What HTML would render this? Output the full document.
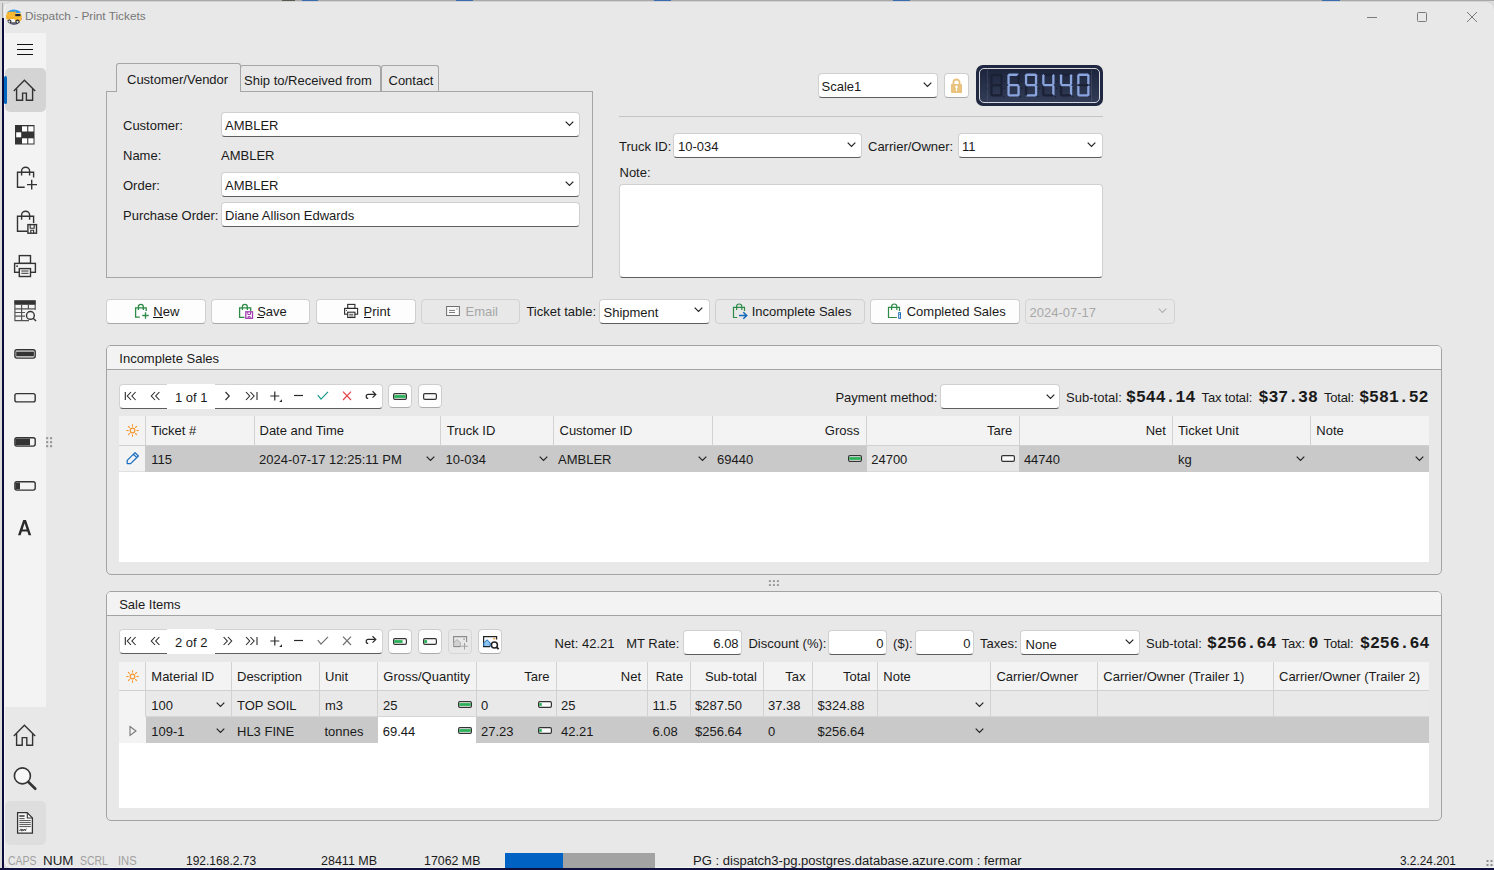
<!DOCTYPE html>
<html><head><meta charset="utf-8">
<style>
*{box-sizing:border-box;margin:0;padding:0}
html,body{width:1494px;height:870px;overflow:hidden;background:#e8e8e8;font-family:"Liberation Sans",sans-serif;font-size:13px;color:#1a1a1a}
.a{position:absolute}
.t{position:absolute;line-height:15px;white-space:nowrap}
.inp{position:absolute;background:#fff;border:1px solid #d0d0d0;border-bottom:1px solid #5e5e5e;border-radius:4px}
.inp.d{background:#e8e8e8;border-color:#cfcfcf}
.chev{position:absolute;width:7px;height:7px;border-right:1.3px solid #333;border-bottom:1.3px solid #333;transform:rotate(45deg)}
.btn{position:absolute;background:#fdfdfd;border:1px solid #d0d0d0;border-bottom-color:#a8a8a8;border-radius:4px}
.ic{position:absolute}
.gh{position:absolute;background:#f3f3f3}
.vl{position:absolute;width:1px;background:#d8d8d8}
</style></head><body>
<!-- desktop edges -->
<div class="a" style="left:0;top:0;width:1494px;height:870px;background:#dcdcdc"></div>
<div class="a" style="left:2px;top:3px;width:1px;height:17px;background:#a8a8a8"></div>
<div class="a" style="left:2px;top:18px;width:2px;height:852px;background:#0c0c3c"></div>
<div class="a" style="left:0;top:868px;width:1494px;height:2px;background:#0f0f3e"></div>
<div class="a" style="left:0;top:0;width:1494px;height:1px;background:#a9a9a9"></div>
<div class="a" style="left:4px;top:1px;width:1490px;height:867px;background:#e8e8e8;border-radius:8px 8px 0 8px;border-top:1px solid #d2d2d2;border-left:1px solid #f4f4f4;border-bottom:1px solid #f4f4f4"></div>
<div class="a" style="left:302px;top:0;width:16px;height:1px;background:#3a6cb0"></div><div class="a" style="left:456px;top:0;width:17px;height:1px;background:#3a6cb0"></div><div class="a" style="left:654px;top:0;width:17px;height:1px;background:#3a6cb0"></div><div class="a" style="left:893px;top:0;width:17px;height:1px;background:#3a6cb0"></div><div class="a" style="left:1322px;top:0;width:18px;height:1px;background:#3a6cb0"></div><div class="a" style="left:282px;top:0;width:13px;height:1px;background:#5a5a50"></div>
<!-- title bar -->
<svg class="a" style="left:4px;top:6px" width="22" height="22" viewBox="4 6 22 22">
<defs><clipPath id="tc"><circle cx="14" cy="16.9" r="8"/></clipPath></defs>
<g clip-path="url(#tc)">
<rect x="5" y="8" width="18" height="18" fill="#e9eef4"/>
<path d="M6 12.5 Q10 9 14 9.5 Q18 9.5 22 12 V13 H6 Z" fill="#3096e8"/>
<path d="M6 11.8 H14.5 L15.6 11 V19.5 H6 Z" fill="#f6b22a"/>
<path d="M15 13.3 H20.8 L22.2 16.5 V21.5 H15 Z" fill="#f8bd2e"/>
<rect x="15.3" y="14" width="5.2" height="2.2" fill="#1e2238"/>
<rect x="21.2" y="18.2" width="1" height="1.6" fill="#e8508a"/>
<rect x="10.3" y="19.2" width="4.4" height="2.6" fill="#f4f4f2"/>
<path d="M6 22.2 H22 V26 H6 Z" fill="#5d5b70"/>
<circle cx="9.3" cy="21.5" r="2.1" fill="#22222e"/><circle cx="9.3" cy="21.6" r="1.1" fill="#e0e0e0"/>
<circle cx="17.5" cy="21.7" r="2.1" fill="#22222e"/><circle cx="17.5" cy="21.8" r="1.1" fill="#e0e0e0"/>
<path d="M7 13 L9 17 M9.5 12.5 L11.5 17 M12 12.5 L14 17" stroke="#f9cf60" stroke-width="0.8" opacity="0.7"/>
</g>
</svg>
<div class="t" style="left:25px;top:8.5px;font-size:11.8px;color:#777">Dispatch - Print Tickets</div>
<div class="a" style="left:1367px;top:17px;width:10px;height:1px;background:#7a7a7a"></div>
<div class="a" style="left:1417px;top:12px;width:10px;height:10px;border:1px solid #7a7a7a;border-radius:1.5px"></div>
<svg class="a" style="left:1466px;top:11px" width="12" height="12" viewBox="0 0 12 12"><path d="M1 1L11 11M11 1L1 11" stroke="#7a7a7a" stroke-width="1"/></svg>

<!-- sidebar -->
<div class="a" style="left:4px;top:33px;width:42px;height:674px;background:#f3f3f3"></div>
<div class="a" style="left:17px;top:44px;width:16px;height:1px;background:#111"></div>
<div class="a" style="left:17px;top:49px;width:16px;height:1px;background:#111"></div>
<div class="a" style="left:17px;top:54px;width:16px;height:1px;background:#111"></div>
<div class="a" style="left:5px;top:68px;width:41px;height:44px;background:#d4d4d4;border-radius:5px"></div>
<div class="a" style="left:4px;top:76px;width:3px;height:28px;background:#0067c0;border-radius:2px"></div>
<div class="a" style="left:5px;top:801px;width:41px;height:44px;background:#dedede;border-radius:5px"></div>
<svg class="a" style="left:0;top:0" width="60" height="870" viewBox="0 0 60 870" fill="none" stroke="#333" stroke-width="1.4">
<!-- home active -->
<path d="M13.8 91 L24.4 80.3 L35.2 91 M16.6 88.8 V100.3 H22.6 V93.1 H26.4 V100.3 H32.6 V88.8"/>
<!-- checker -->
<g stroke="none">
<rect x="15" y="125" width="19.5" height="19.5" fill="#333"/>
<rect x="22" y="126.3" width="5.2" height="5.2" fill="#fff"/><rect x="28.3" y="126.3" width="5.2" height="5.2" fill="#fff"/>
<rect x="16.2" y="132.3" width="5" height="5" fill="#fff"/>
<rect x="22" y="138.3" width="5.2" height="5.2" fill="#fff"/><rect x="28.3" y="138.3" width="5.2" height="5.2" fill="#fff"/>
</g>
<!-- bag plus -->
<path d="M33.6 177.5 V172.3 H17.5 V187.3 H24.7 M21.6 175.6 V171 A4 3.8 0 0 1 29.6 171 V175.6 M27 184.6 H37 M31.7 179.8 V189.6"/>
<!-- bag save -->
<path d="M33.6 223 V216.2 H17.5 V231.2 H27.3 M21.6 219.8 V215 A4 3.8 0 0 1 29.6 215 V219.8"/>
<rect x="27.9" y="224.6" width="8.6" height="8.6"/>
<path d="M30.2 224.6 V228.2 H34.2 V224.6 M30.8 233.2 V230.3 H33.6 V233.2" stroke-width="1.1"/>
<!-- printer -->
<rect x="19.3" y="255.6" width="11.2" height="7.8"/>
<rect x="14.6" y="263.4" width="20.8" height="8.9" fill="#f3f3f3"/>
<rect x="19.3" y="268.6" width="11.2" height="7.9" fill="#f3f3f3"/>
<path d="M21.3 271 H28.5 M21.3 273.3 H28.5" stroke-width="1"/>
<rect x="16.3" y="265.4" width="1.6" height="1.6" fill="#333" stroke="none"/>
<!-- table search -->
<rect x="14.2" y="300.2" width="21.6" height="4.6" fill="#333" stroke="none"/>
<path d="M14.9 304.5 V320.6 H29 M21.6 304.5 V320.6 M28.4 304.5 V309 M35.2 304.5 V310 M14.9 308.8 H35.2 M14.9 312.5 H25 M14.9 316.2 H25" stroke-width="1.2" stroke="#555"/>
<circle cx="30.4" cy="315.4" r="3.9" fill="#f3f3f3" stroke-width="1.4"/>
<path d="M33.2 318.3 L36 321"/>
<!-- batteries -->
<rect x="14.9" y="349.8" width="20.3" height="8.3" rx="2"/>
<rect x="16.2" y="351.6" width="17.7" height="4.7" fill="#333" stroke="none"/>
<rect x="14.9" y="393.6" width="20.3" height="8.3" rx="2"/>
<rect x="14.9" y="437.8" width="20.3" height="8.3" rx="2"/>
<rect x="15.4" y="438.6" width="14.6" height="6.7" fill="#333" stroke="none"/>
<rect x="14.9" y="481.8" width="20.3" height="8.3" rx="2"/>
<rect x="15.4" y="482.6" width="4.6" height="6.7" fill="#333" stroke="none"/>
<!-- A -->
<path d="M18 535.3 L23.2 520 H26 L31.2 535.3 H28.6 L27.34 531.6 H21.86 L20.6 535.3 Z M22.6 529.4 H26.6 L24.6 523.2 Z" fill="#2a2a2a" stroke="none" fill-rule="evenodd"/>
<!-- splitter dots -->
<g fill="#979797" stroke="none">
<rect x="46.1" y="437.1" width="2.1" height="2.1"/><rect x="50" y="437.1" width="2.1" height="2.1"/>
<rect x="46.1" y="441.1" width="2.1" height="2.1"/><rect x="50" y="441.1" width="2.1" height="2.1"/>
<rect x="46.1" y="445.1" width="2.1" height="2.1"/><rect x="50" y="445.1" width="2.1" height="2.1"/>
</g>
<!-- home 2 -->
<path d="M13.8 736 L24.4 725.3 L35.2 736 M16.6 733.8 V745.3 H22.2 V737.6 H26.8 V745.3 H32.6 V733.8"/>
<!-- search -->
<circle cx="22.4" cy="775.9" r="8" stroke-width="1.6" fill="#f7f7f7"/>
<path d="M28.4 782 L35.3 788.8" stroke-width="2.6" stroke-linecap="round"/>
<!-- doc -->
<path d="M17.6 812.6 H27.1 L32.4 817.9 V833.1 H17.6 Z" fill="#fafafa" stroke-width="1.3"/>
<path d="M27.3 812.8 V818 H32.3" stroke-width="1.1"/>
<path d="M19.3 816 H24.6" stroke-width="1.5"/>
<path d="M19.3 818.6 H24.6 M19.3 820.6 H30.8 M19.3 822.6 H30.8 M19.3 824.6 H30.8 M19.3 826.6 H30.8" stroke-width="0.85"/>
<path d="M19.3 830.3 H20.4 L21.1 828.9 L21.9 831.2 L22.8 829.2 L23.6 830.7 L24.4 829 L25.3 830.8 L26.3 828.6" stroke-width="0.9"/>
</svg>



<!-- ============ TAB PANEL ============ -->
<div class="a" style="left:106px;top:91px;width:487px;height:187px;border:1px solid #a6a6a6"></div>
<div class="a" style="left:240px;top:65px;width:141px;height:27px;border:1px solid #a6a6a6;border-bottom:none;border-radius:3px 3px 0 0"></div>
<div class="a" style="left:381px;top:65px;width:58px;height:27px;border:1px solid #a6a6a6;border-bottom:none;border-radius:3px 3px 0 0"></div>
<div class="a" style="left:116px;top:63px;width:125px;height:29px;border:1px solid #a6a6a6;border-bottom:none;border-radius:3px 3px 0 0;background:#e8e8e8"></div>
<div class="t" style="left:127px;top:72px">Customer/Vendor</div>
<div class="t" style="left:244px;top:73px">Ship to/Received from</div>
<div class="t" style="left:388.5px;top:73px">Contact</div>

<div class="t" style="left:123px;top:118px">Customer:</div>
<div class="inp" style="left:221px;top:112px;width:359px;height:25px"></div>
<div class="t" style="left:225px;top:118px">AMBLER</div>
<svg class="a" style="left:564.5px;top:121px" width="9" height="6"><path d="M0.7 0.7 L4.5 4.5 L8.3 0.7" fill="none" stroke="#222" stroke-width="1.2"/></svg>

<div class="t" style="left:123px;top:148px">Name:</div>
<div class="t" style="left:221px;top:148px">AMBLER</div>

<div class="t" style="left:123px;top:178px">Order:</div>
<div class="inp" style="left:221px;top:172px;width:359px;height:25px"></div>
<div class="t" style="left:225px;top:178px">AMBLER</div>
<svg class="a" style="left:564.5px;top:181px" width="9" height="6"><path d="M0.7 0.7 L4.5 4.5 L8.3 0.7" fill="none" stroke="#222" stroke-width="1.2"/></svg>

<div class="t" style="left:123px;top:208px">Purchase Order:</div>
<div class="inp" style="left:221px;top:202px;width:359px;height:25px"></div>
<div class="t" style="left:225px;top:208px">Diane Allison Edwards</div>

<!-- ============ RIGHT TOP ============ -->
<div class="inp" style="left:818px;top:73px;width:120px;height:25px"></div>
<div class="t" style="left:821.5px;top:79px">Scale1</div>
<svg class="a" style="left:922.5px;top:82px" width="9" height="6"><path d="M0.7 0.7 L4.5 4.5 L8.3 0.7" fill="none" stroke="#222" stroke-width="1.2"/></svg>
<div class="a" style="left:944px;top:73px;width:25px;height:25px;background:#fff;border:1px solid #cdcdcd;border-bottom-color:#a9a9a9;border-radius:4px"></div>
<svg class="a" style="left:949px;top:77px" width="16" height="18" viewBox="949 77 16 18"><path d="M953.4 84.6 V82.6 A3.1 3.1 0 0 1 959.6 82.6 V84.6" fill="none" stroke="#e9c27d" stroke-width="1.8"/><rect x="951" y="84" width="11" height="9" rx="0.8" fill="#e9c27d"/><circle cx="956.5" cy="86.9" r="1.3" fill="#fff"/><rect x="955.9" y="87" width="1.2" height="4.2" fill="#fff"/></svg>

<div class="a" style="left:975.5px;top:65px;width:127.5px;height:41px;background:#1f2840;border-radius:7px"></div>
<div class="a" style="left:978.8px;top:68px;width:121px;height:35.3px;border:1.2px solid #d4d7de;border-radius:5px;background:linear-gradient(#1d253d,#323c56)"></div>
<svg class="a" style="left:975px;top:64px" width="130" height="44" viewBox="0 0 130 44"><polygon transform="translate(15.30,9.60)" points="0.50,1.15 1.65,0.00 10.65,0.00 11.80,1.15 10.65,2.30 1.65,2.30" fill="#1b2236"/><polygon transform="translate(15.30,9.60)" points="11.15,0.50 12.30,1.65 12.30,10.35 11.15,11.50 10.00,10.35 10.00,1.65" fill="#1b2236"/><polygon transform="translate(15.30,9.60)" points="11.15,11.50 12.30,12.65 12.30,21.35 11.15,22.50 10.00,21.35 10.00,12.65" fill="#1b2236"/><polygon transform="translate(15.30,9.60)" points="0.50,21.85 1.65,20.70 10.65,20.70 11.80,21.85 10.65,23.00 1.65,23.00" fill="#1b2236"/><polygon transform="translate(15.30,9.60)" points="1.15,11.50 2.30,12.65 2.30,21.35 1.15,22.50 0.00,21.35 0.00,12.65" fill="#1b2236"/><polygon transform="translate(15.30,9.60)" points="1.15,0.50 2.30,1.65 2.30,10.35 1.15,11.50 0.00,10.35 0.00,1.65" fill="#1b2236"/><polygon transform="translate(15.30,9.60)" points="0.50,11.50 1.65,10.35 10.65,10.35 11.80,11.50 10.65,12.65 1.65,12.65" fill="#1b2236"/><circle cx="12.10" cy="17.50" r="0.6" fill="#121727"/><circle cx="12.10" cy="24.20" r="0.6" fill="#121727"/><circle cx="28.40" cy="32.80" r="0.6" fill="#121727"/><polygon transform="translate(32.40,9.60)" points="0.50,1.15 1.65,0.00 10.65,0.00 11.80,1.15 10.65,2.30 1.65,2.30" fill="#8aa4de"/><polygon transform="translate(32.40,9.60)" points="11.15,0.50 12.30,1.65 12.30,10.35 11.15,11.50 10.00,10.35 10.00,1.65" fill="#1b2236"/><polygon transform="translate(32.40,9.60)" points="11.15,11.50 12.30,12.65 12.30,21.35 11.15,22.50 10.00,21.35 10.00,12.65" fill="#8aa4de"/><polygon transform="translate(32.40,9.60)" points="0.50,21.85 1.65,20.70 10.65,20.70 11.80,21.85 10.65,23.00 1.65,23.00" fill="#8aa4de"/><polygon transform="translate(32.40,9.60)" points="1.15,11.50 2.30,12.65 2.30,21.35 1.15,22.50 0.00,21.35 0.00,12.65" fill="#8aa4de"/><polygon transform="translate(32.40,9.60)" points="1.15,0.50 2.30,1.65 2.30,10.35 1.15,11.50 0.00,10.35 0.00,1.65" fill="#8aa4de"/><polygon transform="translate(32.40,9.60)" points="0.50,11.50 1.65,10.35 10.65,10.35 11.80,11.50 10.65,12.65 1.65,12.65" fill="#8aa4de"/><circle cx="29.20" cy="17.50" r="0.6" fill="#121727"/><circle cx="29.20" cy="24.20" r="0.6" fill="#121727"/><circle cx="45.50" cy="32.80" r="0.6" fill="#121727"/><polygon transform="translate(49.90,9.60)" points="0.50,1.15 1.65,0.00 10.65,0.00 11.80,1.15 10.65,2.30 1.65,2.30" fill="#8aa4de"/><polygon transform="translate(49.90,9.60)" points="11.15,0.50 12.30,1.65 12.30,10.35 11.15,11.50 10.00,10.35 10.00,1.65" fill="#8aa4de"/><polygon transform="translate(49.90,9.60)" points="11.15,11.50 12.30,12.65 12.30,21.35 11.15,22.50 10.00,21.35 10.00,12.65" fill="#8aa4de"/><polygon transform="translate(49.90,9.60)" points="0.50,21.85 1.65,20.70 10.65,20.70 11.80,21.85 10.65,23.00 1.65,23.00" fill="#8aa4de"/><polygon transform="translate(49.90,9.60)" points="1.15,11.50 2.30,12.65 2.30,21.35 1.15,22.50 0.00,21.35 0.00,12.65" fill="#1b2236"/><polygon transform="translate(49.90,9.60)" points="1.15,0.50 2.30,1.65 2.30,10.35 1.15,11.50 0.00,10.35 0.00,1.65" fill="#8aa4de"/><polygon transform="translate(49.90,9.60)" points="0.50,11.50 1.65,10.35 10.65,10.35 11.80,11.50 10.65,12.65 1.65,12.65" fill="#8aa4de"/><circle cx="46.70" cy="17.50" r="0.6" fill="#121727"/><circle cx="46.70" cy="24.20" r="0.6" fill="#121727"/><circle cx="63.00" cy="32.80" r="0.6" fill="#121727"/><polygon transform="translate(67.20,9.60)" points="0.50,1.15 1.65,0.00 10.65,0.00 11.80,1.15 10.65,2.30 1.65,2.30" fill="#1b2236"/><polygon transform="translate(67.20,9.60)" points="11.15,0.50 12.30,1.65 12.30,10.35 11.15,11.50 10.00,10.35 10.00,1.65" fill="#8aa4de"/><polygon transform="translate(67.20,9.60)" points="11.15,11.50 12.30,12.65 12.30,21.35 11.15,22.50 10.00,21.35 10.00,12.65" fill="#8aa4de"/><polygon transform="translate(67.20,9.60)" points="0.50,21.85 1.65,20.70 10.65,20.70 11.80,21.85 10.65,23.00 1.65,23.00" fill="#1b2236"/><polygon transform="translate(67.20,9.60)" points="1.15,11.50 2.30,12.65 2.30,21.35 1.15,22.50 0.00,21.35 0.00,12.65" fill="#1b2236"/><polygon transform="translate(67.20,9.60)" points="1.15,0.50 2.30,1.65 2.30,10.35 1.15,11.50 0.00,10.35 0.00,1.65" fill="#8aa4de"/><polygon transform="translate(67.20,9.60)" points="0.50,11.50 1.65,10.35 10.65,10.35 11.80,11.50 10.65,12.65 1.65,12.65" fill="#8aa4de"/><circle cx="64.00" cy="17.50" r="0.6" fill="#121727"/><circle cx="64.00" cy="24.20" r="0.6" fill="#121727"/><circle cx="80.30" cy="32.80" r="0.6" fill="#121727"/><polygon transform="translate(84.90,9.60)" points="0.50,1.15 1.65,0.00 10.65,0.00 11.80,1.15 10.65,2.30 1.65,2.30" fill="#1b2236"/><polygon transform="translate(84.90,9.60)" points="11.15,0.50 12.30,1.65 12.30,10.35 11.15,11.50 10.00,10.35 10.00,1.65" fill="#8aa4de"/><polygon transform="translate(84.90,9.60)" points="11.15,11.50 12.30,12.65 12.30,21.35 11.15,22.50 10.00,21.35 10.00,12.65" fill="#8aa4de"/><polygon transform="translate(84.90,9.60)" points="0.50,21.85 1.65,20.70 10.65,20.70 11.80,21.85 10.65,23.00 1.65,23.00" fill="#1b2236"/><polygon transform="translate(84.90,9.60)" points="1.15,11.50 2.30,12.65 2.30,21.35 1.15,22.50 0.00,21.35 0.00,12.65" fill="#1b2236"/><polygon transform="translate(84.90,9.60)" points="1.15,0.50 2.30,1.65 2.30,10.35 1.15,11.50 0.00,10.35 0.00,1.65" fill="#8aa4de"/><polygon transform="translate(84.90,9.60)" points="0.50,11.50 1.65,10.35 10.65,10.35 11.80,11.50 10.65,12.65 1.65,12.65" fill="#8aa4de"/><circle cx="81.70" cy="17.50" r="0.6" fill="#121727"/><circle cx="81.70" cy="24.20" r="0.6" fill="#121727"/><circle cx="98.00" cy="32.80" r="0.6" fill="#121727"/><polygon transform="translate(102.20,9.60)" points="0.50,1.15 1.65,0.00 10.65,0.00 11.80,1.15 10.65,2.30 1.65,2.30" fill="#8aa4de"/><polygon transform="translate(102.20,9.60)" points="11.15,0.50 12.30,1.65 12.30,10.35 11.15,11.50 10.00,10.35 10.00,1.65" fill="#8aa4de"/><polygon transform="translate(102.20,9.60)" points="11.15,11.50 12.30,12.65 12.30,21.35 11.15,22.50 10.00,21.35 10.00,12.65" fill="#8aa4de"/><polygon transform="translate(102.20,9.60)" points="0.50,21.85 1.65,20.70 10.65,20.70 11.80,21.85 10.65,23.00 1.65,23.00" fill="#8aa4de"/><polygon transform="translate(102.20,9.60)" points="1.15,11.50 2.30,12.65 2.30,21.35 1.15,22.50 0.00,21.35 0.00,12.65" fill="#8aa4de"/><polygon transform="translate(102.20,9.60)" points="1.15,0.50 2.30,1.65 2.30,10.35 1.15,11.50 0.00,10.35 0.00,1.65" fill="#8aa4de"/><polygon transform="translate(102.20,9.60)" points="0.50,11.50 1.65,10.35 10.65,10.35 11.80,11.50 10.65,12.65 1.65,12.65" fill="#1b2236"/><circle cx="99.00" cy="17.50" r="0.6" fill="#121727"/><circle cx="99.00" cy="24.20" r="0.6" fill="#121727"/><circle cx="115.30" cy="32.80" r="0.6" fill="#121727"/><rect x="12" y="4" width="0.6" height="36" fill="#6a7080" opacity="0.5"/><rect x="116.3" y="4" width="0.6" height="36" fill="#6a7080" opacity="0.5"/></svg>

<div class="a" style="left:619px;top:116px;width:484px;height:1px;background:#c4c4c4"></div>
<div class="t" style="left:619px;top:139px">Truck ID:</div>
<div class="inp" style="left:673px;top:133px;width:189px;height:25px"></div>
<div class="t" style="left:678px;top:139px">10-034</div>
<svg class="a" style="left:846.5px;top:142px" width="9" height="6"><path d="M0.7 0.7 L4.5 4.5 L8.3 0.7" fill="none" stroke="#222" stroke-width="1.2"/></svg>
<div class="t" style="left:868px;top:139px">Carrier/Owner:</div>
<div class="inp" style="left:958px;top:133px;width:145px;height:25px"></div>
<div class="t" style="left:962px;top:139px">11</div>
<svg class="a" style="left:1087px;top:142px" width="9" height="6"><path d="M0.7 0.7 L4.5 4.5 L8.3 0.7" fill="none" stroke="#222" stroke-width="1.2"/></svg>
<div class="t" style="left:619.5px;top:165px">Note:</div>
<div class="inp" style="left:619px;top:184px;width:484px;height:94px"></div>


<!-- ============ BUTTON ROW ============ -->
<div class="btn" style="left:106px;top:299px;width:100px;height:25px"></div>
<svg class="a" style="left:130px;top:300px" width="22" height="22" viewBox="130 300 22 22" fill="none" stroke="#2e8b47" stroke-width="1.3">
<path d="M146.2 311 V307.8 H135.6 V317.2 H139.8 M138.4 310 V306.8 A2.3 2.3 0 0 1 143.3 306.8 V310 M142.3 315.5 H148.7 M145.5 312.3 V318.7"/>
</svg>
<div class="t" style="left:153.3px;top:304px">New</div>
<div class="a" style="left:153.3px;top:317.3px;width:9.7px;height:1px;background:#111"></div>

<div class="btn" style="left:211px;top:299px;width:99px;height:25px"></div>
<svg class="a" style="left:235px;top:300px" width="22" height="22" viewBox="235 300 22 22" fill="none" stroke-width="1.3">
<path d="M250.7 311 V307.8 H239.6 V317.4 H244.5 M242.4 310 V306.8 A2.3 2.3 0 0 1 247.3 306.8 V310" stroke="#2e8b47"/>
<rect x="245.8" y="311.8" width="6.7" height="6.5" stroke="#a33cb0" fill="#fff"/>
<path d="M247.8 311.8 V314.5 H250.5 V311.8 M248.2 318.3 V316.4 H250.1 V318.3" stroke="#a33cb0" stroke-width="1"/>
</svg>
<div class="t" style="left:257.2px;top:304px">Save</div>
<div class="a" style="left:257.2px;top:317.3px;width:7px;height:1px;background:#111"></div>

<div class="btn" style="left:316px;top:299px;width:100px;height:25px"></div>
<svg class="a" style="left:340px;top:300px" width="22" height="22" viewBox="340 300 22 22" fill="none" stroke="#2a2a2a" stroke-width="1.1">
<rect x="347.7" y="304.4" width="7.2" height="4"/>
<rect x="344.6" y="308.4" width="13" height="5.8"/>
<rect x="347.7" y="312.2" width="7.2" height="5.3" fill="#fff"/>
<path d="M349.2 314.3 H353.4 M349.2 316 H353.4" stroke-width="0.8"/>
<rect x="345.9" y="309.9" width="1" height="1" fill="#2a2a2a" stroke="none"/>
</svg>
<div class="t" style="left:363.6px;top:304px">Print</div>
<div class="a" style="left:363.6px;top:317.3px;width:7px;height:1px;background:#111"></div>

<div class="btn" style="left:421px;top:299px;width:99px;height:25px;background:#e8e8e8;border-color:#d2d2d2"></div>
<svg class="a" style="left:444px;top:303px" width="18" height="16" viewBox="444 303 18 16" fill="none" stroke="#6e6e6e" stroke-width="1">
<rect x="446.6" y="306.5" width="12.8" height="9" fill="#fafafa"/>
<path d="M449 310.4 H455 M449 312.5 H455" stroke-width="0.9"/>
<rect x="456.4" y="308.3" width="1.2" height="1.2" fill="#999" stroke="none"/>
</svg>
<div class="t" style="left:465.5px;top:304px;color:#a6a6a6">Email</div>

<div class="t" style="left:526.4px;top:304px">Ticket table:</div>
<div class="inp" style="left:599px;top:299px;width:111px;height:25px"></div>
<div class="t" style="left:603.5px;top:304.5px">Shipment</div>
<svg class="a" style="left:694px;top:307px" width="9" height="6"><path d="M0.7 0.7 L4.5 4.5 L8.3 0.7" fill="none" stroke="#222" stroke-width="1.2"/></svg>

<div class="btn" style="left:715px;top:299px;width:150px;height:25px;background:#e8e8e8;border-color:#cfcfcf"></div>
<svg class="a" style="left:730px;top:300px" width="20" height="22" viewBox="730 300 20 22" fill="none" stroke-width="1.2">
<path d="M744.5 311 V307.4 H733.5 V317.5 H737.2 M736.6 310 V306.6 A2.4 2.4 0 0 1 741.8 306.6 V310" stroke="#2e8b47"/>
<path d="M739 315.5 H746.4 M743.3 312.2 L746.7 315.5 L743.3 318.8" stroke="#1668b8" stroke-width="1.5"/>
</svg>
<div class="t" style="left:751.7px;top:304px">Incomplete Sales</div>

<div class="btn" style="left:870px;top:299px;width:150px;height:25px"></div>
<svg class="a" style="left:885px;top:300px" width="20" height="22" viewBox="885 300 20 22" fill="none" stroke-width="1.2">
<path d="M899.5 311 V307.4 H888.5 V317.5 H896.8 M891.6 310 V306.6 A2.4 2.4 0 0 1 896.8 306.6 V310" stroke="#2e8b47"/>
<rect x="898.2" y="312.2" width="2.8" height="6.6" fill="#1668b8" stroke="none"/>
<rect x="899.2" y="313" width="0.9" height="0.9" fill="#fff" stroke="none"/>
<rect x="899.2" y="314.6" width="0.9" height="3.2" fill="#fff" stroke="none"/>
</svg>
<div class="t" style="left:906.7px;top:304px">Completed Sales</div>

<div class="inp" style="left:1025px;top:299px;width:150px;height:25px;background:#e8e8e8;border-color:#d4d4d4"></div>
<div class="t" style="left:1029.5px;top:305px;color:#a8a8a8">2024-07-17</div>
<svg class="a" style="left:1158px;top:307.5px" width="9" height="6"><path d="M0.7 0.7 L4.5 4.5 L8.3 0.7" fill="none" stroke="#b0b0b0" stroke-width="1.1"/></svg>

<!-- ============ PANELS ============ -->
<div class="a" style="left:106px;top:345px;width:1336px;height:230px;border:1px solid #a3a3a3;border-radius:5px;background:#e8e8e8"></div>
<div class="a" style="left:107px;top:346px;width:1334px;height:24px;background:#f3f3f3;border-bottom:1px solid #a3a3a3;border-radius:4px 4px 0 0"></div>
<div class="t" style="left:119.3px;top:350.6px;">Incomplete Sales</div>
<div class="a" style="left:119px;top:384px;width:263.5px;height:25px;background:#fff;border:1px solid #d2d2d2;border-bottom:1px solid #5e5e5e;border-radius:4px"></div>
<div class="a" style="left:167px;top:384px;width:48px;height:25px;background:#fff"></div>
<svg class="a" style="left:119px;top:384px" width="265" height="24" viewBox="119 384 265 24" fill="none" stroke="#2a2a2a" stroke-width="1.1"><path d="M125.3 392 V400 M131 392 L127.3 396 L131 400 M135.6 392 L131.9 396 L135.6 400"/><path d="M155 392 L151.3 396 L155 400 M159.4 392 L155.7 396 L159.4 400"/><path d="M225.5 392 L229.3 396 L225.5 400"/><path d="M246 392 L249.7 396 L246 400 M250.4 392 L254.1 396 L250.4 400 M257 392 V400"/><path d="M270.3 396 H279.3 M274.8 391.5 V400.5" stroke-width="1.2"/><path d="M279.2 402 L282 399.2 V402 Z" fill="#2a2a2a" stroke="none"/><path d="M294 395.5 H303" stroke-width="1.2"/><path d="M317.8 395.2 L321 399.2 L328 391.8" stroke="#17998a" stroke-width="1.2"/><path d="M343 391.7 L351 400 M351 391.7 L343 400" stroke="#e8414b" stroke-width="1.2"/><path d="M375.7 394.4 H368.2 A2 2 0 0 0 368.2 398.4 M372.5 391.2 L375.8 394.4 L372.5 397.6" stroke-width="1.2"/></svg>
<div class="t" style="left:175px;top:389.5px;">1 of 1</div>
<div class="btn" style="left:388px;top:384px;width:24px;height:24px;border-color:#cdcdcd;border-bottom-color:#ababab;border-radius:4.5px"></div>
<div class="btn" style="left:418px;top:384px;width:24px;height:24px;border-color:#cdcdcd;border-bottom-color:#ababab;border-radius:4.5px"></div>
<svg class="a" style="left:393px;top:393px" width="14" height="7" viewBox="0 0 14 7"><rect x="0.6" y="0.6" width="12.8" height="5.8" rx="1.3" fill="#fafafa" stroke="#333" stroke-width="1.2"/><rect x="1.2" y="2.1" width="11.60" height="2.8" fill="#2bb058"/></svg>
<svg class="a" style="left:423px;top:393px" width="14" height="7" viewBox="0 0 14 7"><rect x="0.6" y="0.6" width="12.8" height="5.8" rx="1.3" fill="#fafafa" stroke="#333" stroke-width="1.2"/></svg>
<div class="t" style="left:835.4px;top:389.9px;">Payment method:</div>
<div class="inp" style="left:940px;top:384px;width:120px;height:25px"></div>
<svg class="a" style="left:1045.5px;top:393.5px" width="9" height="6"><path d="M0.7 0.7 L4.5 4.5 L8.3 0.7" fill="none" stroke="#222" stroke-width="1.2"/></svg>
<div class="t" style="left:1066.1px;top:389.9px;">Sub-total:</div>
<div class="t" style="left:1126px;top:389.9px;font-family:'Liberation Mono',monospace;font-weight:bold;font-size:16.5px">$544.14</div>
<div class="t" style="left:1201.6px;top:389.9px;letter-spacing:-0.15px">Tax total:</div>
<div class="t" style="left:1258.5px;top:389.9px;font-family:'Liberation Mono',monospace;font-weight:bold;font-size:16.5px">$37.38</div>
<div class="t" style="left:1324px;top:389.9px;letter-spacing:-0.2px">Total:</div>
<div class="t" style="left:1359.2px;top:389.9px;font-family:'Liberation Mono',monospace;font-weight:bold;font-size:16.5px">$581.52</div>
<div class="a" style="left:119px;top:416px;width:1310px;height:146px;background:#fff"></div>
<div class="gh" style="left:119px;top:416px;width:1310px;height:30px;border-bottom:1px solid #d0d0d0"></div>
<div class="vl" style="left:144.8px;top:416px;height:30px;background:#d2d2d2"></div>
<div class="vl" style="left:253.8px;top:416px;height:30px;background:#d2d2d2"></div>
<div class="vl" style="left:440.2px;top:416px;height:30px;background:#d2d2d2"></div>
<div class="vl" style="left:552.6px;top:416px;height:30px;background:#d2d2d2"></div>
<div class="vl" style="left:711.7px;top:416px;height:30px;background:#d2d2d2"></div>
<div class="vl" style="left:866.1px;top:416px;height:30px;background:#d2d2d2"></div>
<div class="vl" style="left:1018.8px;top:416px;height:30px;background:#d2d2d2"></div>
<div class="vl" style="left:1171.8px;top:416px;height:30px;background:#d2d2d2"></div>
<div class="vl" style="left:1310.0px;top:416px;height:30px;background:#d2d2d2"></div>
<div class="a" style="left:119px;top:446px;width:26px;height:25.5px;background:#f3f3f3;border-bottom:1px solid #e0e0e0"></div>
<div class="a" style="left:145.3px;top:446px;width:1283.7px;height:25.5px;background:#c9c9c9"></div>
<div class="a" style="left:866.6px;top:446px;width:152.7px;height:25.5px;background:#e6e6e6;border-bottom:1px solid #d8d8d8"></div>
<svg class="a" style="left:124px;top:422px" width="17" height="17" viewBox="-8.5 -8.5 17 17"><circle r="2.3" fill="none" stroke="#f5962a" stroke-width="1.25"/><g stroke="#f5962a" stroke-width="1.1"><line x1="0" y1="-3.9" x2="0" y2="-6.2" transform="rotate(0)"/><line x1="0" y1="-3.9" x2="0" y2="-6.2" transform="rotate(45)"/><line x1="0" y1="-3.9" x2="0" y2="-6.2" transform="rotate(90)"/><line x1="0" y1="-3.9" x2="0" y2="-6.2" transform="rotate(135)"/><line x1="0" y1="-3.9" x2="0" y2="-6.2" transform="rotate(180)"/><line x1="0" y1="-3.9" x2="0" y2="-6.2" transform="rotate(225)"/><line x1="0" y1="-3.9" x2="0" y2="-6.2" transform="rotate(270)"/><line x1="0" y1="-3.9" x2="0" y2="-6.2" transform="rotate(315)"/></g></svg>
<svg class="a" style="left:125px;top:451px" width="15" height="15" viewBox="125 451 15 15"><path d="M127.2 463.6 V460.4 L135 452.6 L138.4 456 L130.6 463.6 Z M133.4 454.2 L136.8 457.6" fill="none" stroke="#1a6fc0" stroke-width="1.25" stroke-linejoin="round"/></svg>
<div class="t" style="left:151.2px;top:422.8px;">Ticket #</div>
<div class="t" style="left:259.5px;top:422.8px;">Date and Time</div>
<div class="t" style="left:446.7px;top:422.8px;">Truck ID</div>
<div class="t" style="left:559.5px;top:422.8px;">Customer ID</div>
<div class="t" style="right:634.5px;top:422.8px;">Gross</div>
<div class="t" style="right:481.70000000000005px;top:422.8px;">Tare</div>
<div class="t" style="right:328.0999999999999px;top:422.8px;">Net</div>
<div class="t" style="left:1177.9px;top:422.8px;">Ticket Unit</div>
<div class="t" style="left:1316.3px;top:422.8px;">Note</div>
<div class="t" style="left:151.2px;top:451.5px;">115</div>
<div class="t" style="left:259px;top:451.5px;">2024-07-17 12:25:11 PM</div>
<svg class="a" style="left:425.7px;top:455.6px" width="9" height="6"><path d="M0.7 0.7 L4.5 4.5 L8.3 0.7" fill="none" stroke="#222" stroke-width="1.2"/></svg>
<div class="t" style="left:445.5px;top:451.5px;">10-034</div>
<svg class="a" style="left:538.8px;top:455.6px" width="9" height="6"><path d="M0.7 0.7 L4.5 4.5 L8.3 0.7" fill="none" stroke="#222" stroke-width="1.2"/></svg>
<div class="t" style="left:558px;top:451.5px;">AMBLER</div>
<svg class="a" style="left:697.5px;top:455.6px" width="9" height="6"><path d="M0.7 0.7 L4.5 4.5 L8.3 0.7" fill="none" stroke="#222" stroke-width="1.2"/></svg>
<div class="t" style="left:717px;top:451.5px;">69440</div>
<svg class="a" style="left:848px;top:455px" width="14" height="7" viewBox="0 0 14 7"><rect x="0.6" y="0.6" width="12.8" height="5.8" rx="1.3" fill="#fafafa" stroke="#333" stroke-width="1.2"/><rect x="1.2" y="2.1" width="11.60" height="2.8" fill="#2bb058"/></svg>
<div class="t" style="left:871.2px;top:451.5px;">24700</div>
<svg class="a" style="left:1001px;top:455px" width="14" height="7" viewBox="0 0 14 7"><rect x="0.6" y="0.6" width="12.8" height="5.8" rx="1.3" fill="#fafafa" stroke="#333" stroke-width="1.2"/></svg>
<div class="t" style="left:1023.9px;top:451.5px;">44740</div>
<div class="t" style="left:1177.9px;top:451.5px;">kg</div>
<svg class="a" style="left:1295.6px;top:455.6px" width="9" height="6"><path d="M0.7 0.7 L4.5 4.5 L8.3 0.7" fill="none" stroke="#222" stroke-width="1.2"/></svg>
<svg class="a" style="left:1414.5px;top:455.6px" width="9" height="6"><path d="M0.7 0.7 L4.5 4.5 L8.3 0.7" fill="none" stroke="#222" stroke-width="1.2"/></svg>
<svg class="a" style="left:768px;top:578px" width="12" height="8" viewBox="0 0 12 8"><g fill="#9a9a9a"><rect x="0.9" y="2.1" width="2" height="2"/><rect x="0.9" y="6.1" width="2" height="2"/><rect x="4.9" y="2.1" width="2" height="2"/><rect x="4.9" y="6.1" width="2" height="2"/><rect x="8.9" y="2.1" width="2" height="2"/><rect x="8.9" y="6.1" width="2" height="2"/></g></svg>
<div class="a" style="left:106px;top:591px;width:1336px;height:230px;border:1px solid #a3a3a3;border-radius:5px;background:#e8e8e8"></div>
<div class="a" style="left:107px;top:592px;width:1334px;height:24px;background:#f3f3f3;border-bottom:1px solid #a3a3a3;border-radius:4px 4px 0 0"></div>
<div class="t" style="left:119.2px;top:596.8px;">Sale Items</div>
<div class="a" style="left:119px;top:629px;width:263.5px;height:25px;background:#fff;border:1px solid #d2d2d2;border-bottom:1px solid #5e5e5e;border-radius:4px"></div>
<div class="a" style="left:167px;top:629px;width:48px;height:25px;background:#fff"></div>
<svg class="a" style="left:119px;top:629px" width="265" height="24" viewBox="119 629 265 24" fill="none" stroke="#2a2a2a" stroke-width="1.1"><path d="M125.3 637 V645 M131 637 L127.3 641 L131 645 M135.6 637 L131.9 641 L135.6 645"/><path d="M155 637 L151.3 641 L155 645 M159.4 637 L155.7 641 L159.4 645"/><path d="M223.6 637 L227.3 641 L223.6 645 M228 637 L231.7 641 L228 645"/><path d="M246 637 L249.7 641 L246 645 M250.4 637 L254.1 641 L250.4 645 M257 637 V645"/><path d="M270.3 641 H279.3 M274.8 636.5 V645.5" stroke-width="1.2"/><path d="M279.2 647 L282 644.2 V647 Z" fill="#2a2a2a" stroke="none"/><path d="M294 640.5 H303" stroke-width="1.2"/><path d="M317.8 640.2 L321 644.2 L328 636.8" stroke="#707070" stroke-width="1.2"/><path d="M343 636.7 L351 645 M351 636.7 L343 645" stroke="#707070" stroke-width="1.2"/><path d="M375.7 639.4 H368.2 A2 2 0 0 0 368.2 643.4 M372.5 636.2 L375.8 639.4 L372.5 642.6" stroke-width="1.2"/></svg>
<div class="t" style="left:175px;top:634.5px;">2 of 2</div>
<div class="btn" style="left:388px;top:629px;width:24px;height:25px;border-color:#cdcdcd;border-bottom-color:#ababab;border-radius:4.5px"></div>
<div class="btn" style="left:418px;top:629px;width:24px;height:25px;border-color:#cdcdcd;border-bottom-color:#ababab;border-radius:4.5px"></div>
<div class="btn" style="left:478px;top:629px;width:24px;height:25px;border-color:#cdcdcd;border-bottom-color:#ababab;border-radius:4.5px"></div>
<div class="btn" style="left:448px;top:629px;width:24px;height:25px;background:#e8e8e8;border-color:#d6d6d6"></div>
<svg class="a" style="left:393px;top:638px" width="14" height="7" viewBox="0 0 14 7"><rect x="0.6" y="0.6" width="12.8" height="5.8" rx="1.3" fill="#fafafa" stroke="#333" stroke-width="1.2"/><rect x="1.2" y="2.1" width="8.35" height="2.8" fill="#2bb058"/></svg>
<svg class="a" style="left:423px;top:638px" width="14" height="7" viewBox="0 0 14 7"><rect x="0.6" y="0.6" width="12.8" height="5.8" rx="1.3" fill="#fafafa" stroke="#333" stroke-width="1.2"/><rect x="1.2" y="2.1" width="2.90" height="2.8" fill="#2bb058"/></svg>
<svg class="a" style="left:452px;top:635px" width="18" height="16" viewBox="0 0 18 16"><path d="M1.6 11.6 V1.6 H14.6 V7" fill="none" stroke="#8a8a8a" stroke-width="1.1"/><path d="M1.8 11.6 V7.6 L5.1 4.6 L8.4 7.6 V11.6 Z" fill="#d2d2d2" stroke="#a8a8a8" stroke-width="0.8"/><path d="M1.4 11.6 H8.6" stroke="#8a8a8a" stroke-width="1"/><path d="M9.2 11.2 H15.8 M12.5 7.9 V14.5" stroke="#a0a0a0" stroke-width="1"/><rect x="11.3" y="3.3" width="1.6" height="1.6" fill="#a5a5a5"/></svg>
<svg class="a" style="left:482px;top:635px" width="18" height="16" viewBox="0 0 18 16"><path d="M1.6 11.6 V1.6 H14.6 V4.5" fill="none" stroke="#222" stroke-width="1.2"/><path d="M1.8 11.6 V7.8 L5 4.8 L8.2 7.8 V11.6 Z" fill="#8ec0ec" stroke="#1a6fc0" stroke-width="1"/><path d="M1 11.6 H8" stroke="#222" stroke-width="1.2"/><circle cx="12.4" cy="10" r="3" fill="#fff" stroke="#222" stroke-width="1.5"/><path d="M14.5 12.1 L16.6 14.2" stroke="#222" stroke-width="1.9"/><rect x="11.2" y="3" width="2.2" height="1.4" fill="#f5a04a"/></svg>
<div class="t" style="left:554.5px;top:636.3px;">Net: 42.21</div>
<div class="t" style="left:626.2px;top:636.3px;">MT Rate:</div>
<div class="inp" style="left:683px;top:630px;width:59px;height:25px"></div>
<div class="t" style="right:755.4px;top:636.3px;">6.08</div>
<div class="t" style="left:748.4px;top:636.3px;">Discount (%):</div>
<div class="inp" style="left:828px;top:630px;width:59px;height:25px"></div>
<div class="t" style="right:610.5px;top:636.3px;">0</div>
<div class="t" style="left:893.1px;top:636.3px;">($):</div>
<div class="inp" style="left:915px;top:630px;width:59px;height:25px"></div>
<div class="t" style="right:523.5px;top:636.3px;">0</div>
<div class="t" style="left:980px;top:636.3px;">Taxes:</div>
<div class="inp" style="left:1020px;top:630px;width:120px;height:25px"></div>
<div class="t" style="left:1025.6px;top:636.8px;">None</div>
<svg class="a" style="left:1125.3px;top:639px" width="9" height="6"><path d="M0.7 0.7 L4.5 4.5 L8.3 0.7" fill="none" stroke="#222" stroke-width="1.2"/></svg>
<div class="t" style="left:1146.1px;top:636.3px;">Sub-total:</div>
<div class="t" style="left:1207px;top:636.3px;font-family:'Liberation Mono',monospace;font-weight:bold;font-size:16.5px">$256.64</div>
<div class="t" style="left:1281.4px;top:636.3px;">Tax:</div>
<div class="t" style="left:1308.6px;top:636.3px;font-family:'Liberation Mono',monospace;font-weight:bold;font-size:16.5px">0</div>
<div class="t" style="left:1323.6px;top:636.3px;letter-spacing:-0.2px">Total:</div>
<div class="t" style="left:1360px;top:636.3px;font-family:'Liberation Mono',monospace;font-weight:bold;font-size:16.5px">$256.64</div>
<div class="a" style="left:119px;top:662px;width:1310px;height:146px;background:#fff"></div>
<div class="gh" style="left:119px;top:662px;width:1310px;height:29.299999999999955px;border-bottom:1px solid #d0d0d0"></div>
<div class="a" style="left:119px;top:691.3px;width:26.6px;height:26.0px;background:#f3f3f3"></div>
<div class="a" style="left:145.6px;top:691.3px;width:1283.4px;height:26.0px;background:#e9e9e9;border-bottom:1px solid #d6d6d6"></div>
<div class="a" style="left:119px;top:717.3px;width:26.6px;height:26.200000000000045px;background:#f3f3f3"></div>
<div class="a" style="left:145.6px;top:717.3px;width:1283.4px;height:26.200000000000045px;background:#c9c9c9"></div>
<div class="a" style="left:377.6px;top:717.3px;width:98.6px;height:26.200000000000045px;background:#fff"></div>
<div class="vl" style="left:145.1px;top:662px;height:55.299999999999955px;background:#d2d2d2"></div>
<div class="vl" style="left:231.0px;top:662px;height:55.299999999999955px;background:#d2d2d2"></div>
<div class="vl" style="left:319.0px;top:662px;height:55.299999999999955px;background:#d2d2d2"></div>
<div class="vl" style="left:376.6px;top:662px;height:55.299999999999955px;background:#d2d2d2"></div>
<div class="vl" style="left:475.7px;top:662px;height:55.299999999999955px;background:#d2d2d2"></div>
<div class="vl" style="left:556.1px;top:662px;height:55.299999999999955px;background:#d2d2d2"></div>
<div class="vl" style="left:647.3px;top:662px;height:55.299999999999955px;background:#d2d2d2"></div>
<div class="vl" style="left:689.7px;top:662px;height:55.299999999999955px;background:#d2d2d2"></div>
<div class="vl" style="left:763.3px;top:662px;height:55.299999999999955px;background:#d2d2d2"></div>
<div class="vl" style="left:812.0px;top:662px;height:55.299999999999955px;background:#d2d2d2"></div>
<div class="vl" style="left:877.2px;top:662px;height:55.299999999999955px;background:#d2d2d2"></div>
<div class="vl" style="left:989.6px;top:662px;height:55.299999999999955px;background:#d2d2d2"></div>
<div class="vl" style="left:1096.9px;top:662px;height:55.299999999999955px;background:#d2d2d2"></div>
<div class="vl" style="left:1273.1px;top:662px;height:55.299999999999955px;background:#d2d2d2"></div>
<svg class="a" style="left:128px;top:725px" width="10" height="12" viewBox="0 0 10 12"><path d="M2 1.5 L8 6 L2 10.5 Z" fill="none" stroke="#777" stroke-width="1.1"/></svg>
<svg class="a" style="left:124px;top:668px" width="17" height="17" viewBox="-8.5 -8.5 17 17"><circle r="2.3" fill="none" stroke="#f5962a" stroke-width="1.25"/><g stroke="#f5962a" stroke-width="1.1"><line x1="0" y1="-3.9" x2="0" y2="-6.2" transform="rotate(0)"/><line x1="0" y1="-3.9" x2="0" y2="-6.2" transform="rotate(45)"/><line x1="0" y1="-3.9" x2="0" y2="-6.2" transform="rotate(90)"/><line x1="0" y1="-3.9" x2="0" y2="-6.2" transform="rotate(135)"/><line x1="0" y1="-3.9" x2="0" y2="-6.2" transform="rotate(180)"/><line x1="0" y1="-3.9" x2="0" y2="-6.2" transform="rotate(225)"/><line x1="0" y1="-3.9" x2="0" y2="-6.2" transform="rotate(270)"/><line x1="0" y1="-3.9" x2="0" y2="-6.2" transform="rotate(315)"/></g></svg>
<div class="t" style="left:151.3px;top:669px;">Material ID</div>
<div class="t" style="left:237px;top:669px;">Description</div>
<div class="t" style="left:325px;top:669px;">Unit</div>
<div class="t" style="left:383.3px;top:669px;">Gross/Quantity</div>
<div class="t" style="left:883.3px;top:669px;">Note</div>
<div class="t" style="left:996.4px;top:669px;">Carrier/Owner</div>
<div class="t" style="left:1103.3px;top:669px;">Carrier/Owner (Trailer 1)</div>
<div class="t" style="left:1279px;top:669px;">Carrier/Owner (Trailer 2)</div>
<div class="t" style="right:944.5px;top:669px;">Tare</div>
<div class="t" style="right:853px;top:669px;">Net</div>
<div class="t" style="right:810.8px;top:669px;">Rate</div>
<div class="t" style="right:737px;top:669px;">Sub-total</div>
<div class="t" style="right:688.6px;top:669px;">Tax</div>
<div class="t" style="right:623.6px;top:669px;">Total</div>
<div class="t" style="left:151.3px;top:697.8px;">100</div>
<svg class="a" style="left:215.5px;top:701.8px" width="9" height="6"><path d="M0.7 0.7 L4.5 4.5 L8.3 0.7" fill="none" stroke="#222" stroke-width="1.2"/></svg>
<div class="t" style="left:237px;top:697.8px;">TOP SOIL</div>
<div class="t" style="left:325px;top:697.8px;">m3</div>
<div class="t" style="left:383px;top:697.8px;">25</div>
<svg class="a" style="left:458px;top:701px" width="14" height="7" viewBox="0 0 14 7"><rect x="0.6" y="0.6" width="12.8" height="5.8" rx="1.3" fill="#fafafa" stroke="#333" stroke-width="1.2"/><rect x="1.2" y="2.1" width="11.60" height="2.8" fill="#2bb058"/></svg>
<div class="t" style="left:481px;top:697.8px;">0</div>
<svg class="a" style="left:538px;top:701px" width="14" height="7" viewBox="0 0 14 7"><rect x="0.6" y="0.6" width="12.8" height="5.8" rx="1.3" fill="#fafafa" stroke="#333" stroke-width="1.2"/><rect x="1.2" y="2.1" width="2.55" height="2.8" fill="#2bb058"/></svg>
<div class="t" style="left:561px;top:697.8px;">25</div>
<div class="t" style="left:652.5px;top:697.8px;">11.5</div>
<div class="t" style="left:695px;top:697.8px;">$287.50</div>
<div class="t" style="left:768px;top:697.8px;">37.38</div>
<div class="t" style="left:817.5px;top:697.8px;">$324.88</div>
<svg class="a" style="left:975.3px;top:701.8px" width="9" height="6"><path d="M0.7 0.7 L4.5 4.5 L8.3 0.7" fill="none" stroke="#222" stroke-width="1.2"/></svg>
<div class="t" style="left:151.3px;top:724px;">109-1</div>
<svg class="a" style="left:215.5px;top:728px" width="9" height="6"><path d="M0.7 0.7 L4.5 4.5 L8.3 0.7" fill="none" stroke="#222" stroke-width="1.2"/></svg>
<div class="t" style="left:237px;top:724px;">HL3 FINE</div>
<div class="t" style="left:324.5px;top:724px;">tonnes</div>
<div class="t" style="left:382.8px;top:724px;">69.44</div>
<svg class="a" style="left:458px;top:727px" width="14" height="7" viewBox="0 0 14 7"><rect x="0.6" y="0.6" width="12.8" height="5.8" rx="1.3" fill="#fafafa" stroke="#333" stroke-width="1.2"/><rect x="1.2" y="2.1" width="11.60" height="2.8" fill="#2bb058"/></svg>
<div class="t" style="left:481px;top:724px;">27.23</div>
<svg class="a" style="left:538px;top:727px" width="14" height="7" viewBox="0 0 14 7"><rect x="0.6" y="0.6" width="12.8" height="5.8" rx="1.3" fill="#fafafa" stroke="#333" stroke-width="1.2"/><rect x="1.2" y="2.1" width="2.55" height="2.8" fill="#2bb058"/></svg>
<div class="t" style="left:561px;top:724px;">42.21</div>
<div class="t" style="left:652.5px;top:724px;">6.08</div>
<div class="t" style="left:695px;top:724px;">$256.64</div>
<div class="t" style="left:768px;top:724px;">0</div>
<div class="t" style="left:817.5px;top:724px;">$256.64</div>
<svg class="a" style="left:975.3px;top:728px" width="9" height="6"><path d="M0.7 0.7 L4.5 4.5 L8.3 0.7" fill="none" stroke="#222" stroke-width="1.2"/></svg>
<!-- ============ END PANELS ============ -->

<!-- ============ STATUS BAR ============ -->
<div class="t" style="left:7.7px;top:853.8px;font-size:12.5px;color:#a0a0a0;transform-origin:0 0;transform:scaleX(0.84)">CAPS</div>
<div class="t" style="left:43.3px;top:853.8px;font-size:12.5px;color:#1a1a1a;transform-origin:0 0;transform:scaleX(1.07)">NUM</div>
<div class="t" style="left:80.3px;top:853.8px;font-size:12.5px;color:#a0a0a0;transform-origin:0 0;transform:scaleX(0.837)">SCRL</div>
<div class="t" style="left:118.3px;top:853.8px;font-size:12.5px;color:#a0a0a0;transform-origin:0 0;transform:scaleX(0.897)">INS</div>
<div class="t" style="left:186.2px;top:853.8px;font-size:12.5px;transform-origin:0 0;transform:scaleX(0.96)">192.168.2.73</div>
<div class="t" style="left:321px;top:853.8px;font-size:12.5px;transform-origin:0 0;transform:scaleX(1.0)">28411 MB</div>
<div class="t" style="left:424px;top:853.8px;font-size:12.5px;transform-origin:0 0;transform:scaleX(0.99)">17062 MB</div>
<div class="a" style="left:505.2px;top:852.5px;width:150px;height:15.5px;background:#a3a3a3"></div>
<div class="a" style="left:505.2px;top:852.5px;width:58px;height:15.5px;background:#0063c4"></div>
<div class="t" style="left:692.9px;top:853.8px;font-size:12.5px;transform-origin:0 0;transform:scaleX(1.044)">PG : dispatch3-pg.postgres.database.azure.com : fermar</div>
<div class="t" style="left:1399.7px;top:853.8px;font-size:12.5px;transform-origin:0 0;transform:scaleX(0.946)">3.2.24.201</div>
<svg class="a" style="left:1484px;top:858px" width="10" height="10" viewBox="0 0 10 10"><g fill="#8e8e8e"><rect x="2.5" y="2" width="2" height="2"/><rect x="6.5" y="2" width="2" height="2"/><rect x="2.5" y="6" width="2" height="2"/><rect x="6.5" y="6" width="2" height="2"/></g></svg>

</body></html>
